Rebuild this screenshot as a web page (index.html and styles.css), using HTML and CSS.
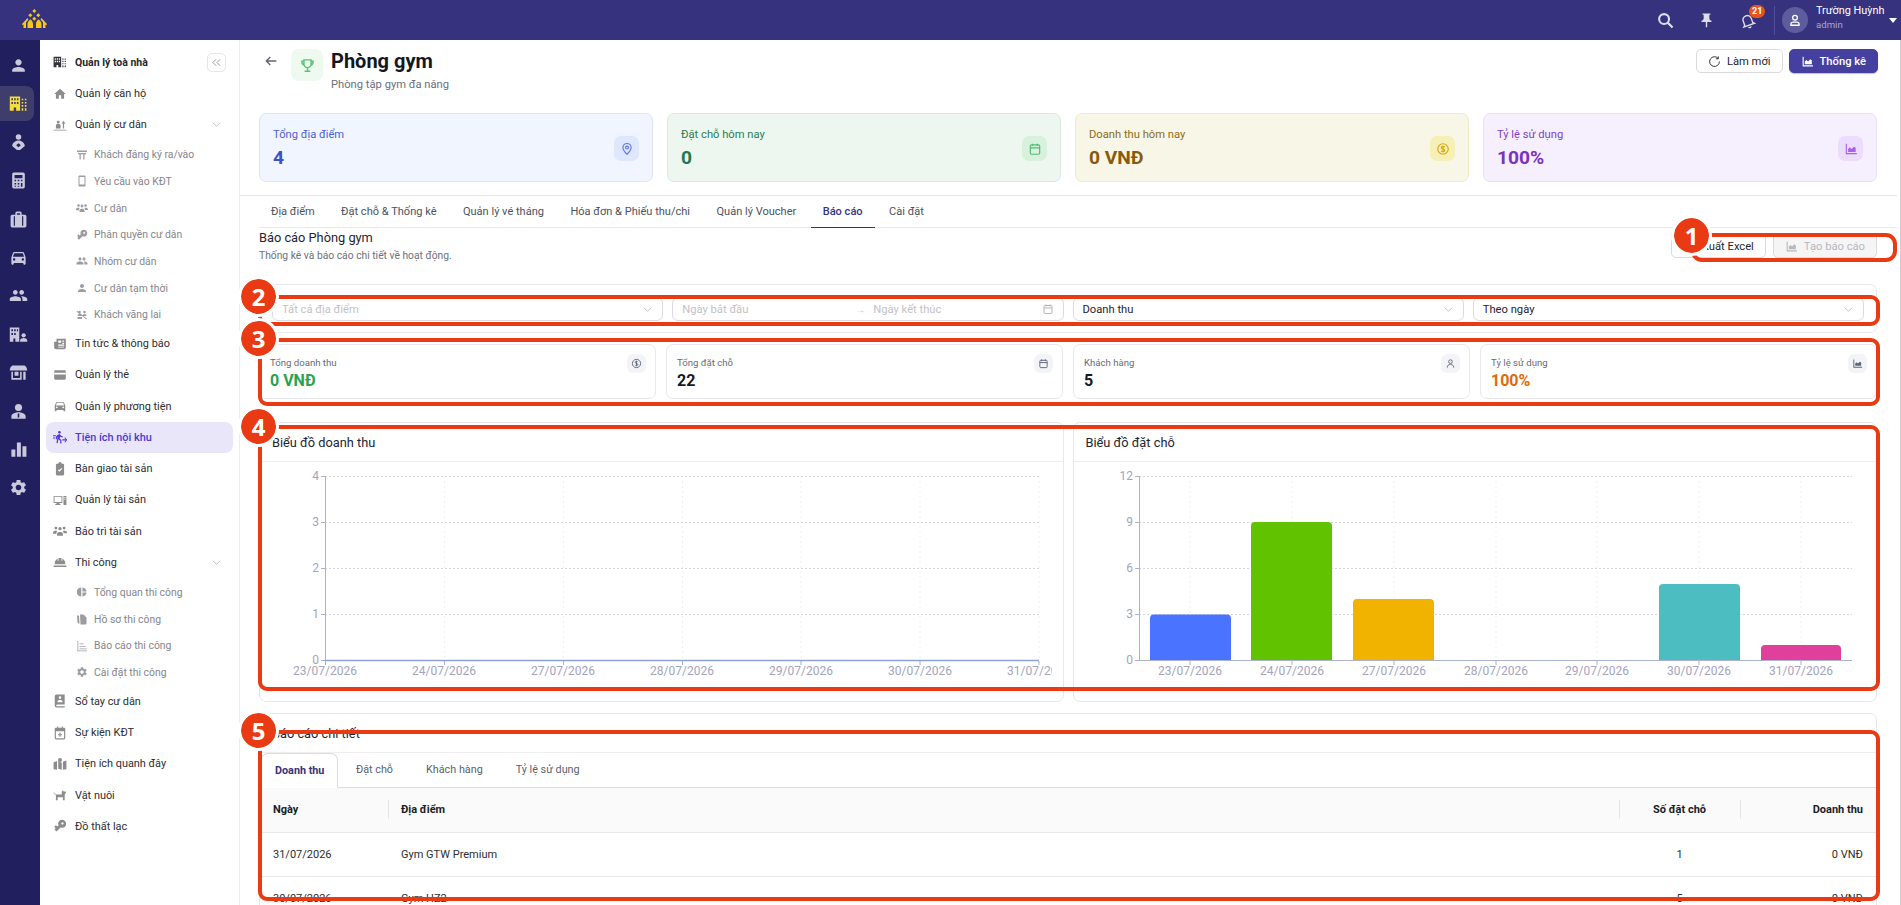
FILE: index.html
```html
<!DOCTYPE html>
<html lang="vi">
<head>
  <meta charset="UTF-8" />
  <title>Phòng gym</title>
  <meta name="viewport" content="width=device-width, initial-scale=1" />
  <link rel="stylesheet" href="styles.css">
</head>
<body>
  <!-- icon sprite -->
  <svg class="sprite" aria-hidden="true">
    <symbol id="i-person" viewBox="0 0 24 24"><path d="M12 12c2.21 0 4-1.79 4-4s-1.79-4-4-4-4 1.79-4 4 1.79 4 4 4zm0 2c-2.67 0-8 1.34-8 4v2h16v-2c0-2.66-5.33-4-8-4z"/></symbol>
    <symbol id="i-home" viewBox="0 0 24 24"><path d="M10 20v-6h4v6h5v-8h3L12 3 2 12h3v8z"/></symbol>
    <symbol id="i-group" viewBox="0 0 24 24"><path d="M16 11c1.66 0 2.99-1.34 2.99-3S17.66 5 16 5c-1.66 0-3 1.34-3 3s1.34 3 3 3zm-8 0c1.66 0 2.99-1.34 2.99-3S9.66 5 8 5C6.34 5 5 6.34 5 8s1.34 3 3 3zm0 2c-2.33 0-7 1.17-7 3.5V19h14v-2.5c0-2.33-4.67-3.5-7-3.5zm8 0c-.29 0-.62.02-.97.05 1.16.84 1.97 1.97 1.97 3.45V19h6v-2.5c0-2.33-4.67-3.5-7-3.5z"/></symbol>
    <symbol id="i-car" viewBox="0 0 24 24"><path d="M18.92 6.01C18.72 5.42 18.16 5 17.5 5h-11c-.66 0-1.21.42-1.42 1.01L3 12v8c0 .55.45 1 1 1h1c.55 0 1-.45 1-1v-1h12v1c0 .55.45 1 1 1h1c.55 0 1-.45 1-1v-8l-2.08-5.99zM6.5 16c-.83 0-1.5-.67-1.5-1.5S5.67 13 6.5 13s1.5.67 1.5 1.5S7.33 16 6.5 16zm11 0c-.83 0-1.5-.67-1.5-1.5s.67-1.5 1.5-1.5 1.5.67 1.5 1.5-.67 1.5-1.5 1.5zM5 11l1.5-4.5h11L19 11H5z"/></symbol>
    <symbol id="i-card" viewBox="0 0 24 24"><path fill-rule="evenodd" d="M4 4h16a2 2 0 0 1 2 2v12a2 2 0 0 1-2 2H4a2 2 0 0 1-2-2V6a2 2 0 0 1 2-2zM2 8v3h20V8z"/></symbol>
    <symbol id="i-gear" viewBox="0 0 24 24"><path d="M19.14 12.94c.04-.3.06-.61.06-.94 0-.32-.02-.64-.07-.94l2.03-1.58c.18-.14.23-.41.12-.61l-1.92-3.32c-.12-.22-.37-.29-.59-.22l-2.39.96c-.5-.38-1.03-.7-1.62-.94l-.36-2.54c-.04-.24-.24-.41-.48-.41h-3.84c-.24 0-.43.17-.47.41l-.36 2.54c-.59.24-1.13.57-1.62.94l-2.39-.96c-.22-.08-.47 0-.59.22L2.74 8.87c-.12.21-.08.47.12.61l2.03 1.58c-.05.3-.09.63-.09.94s.02.64.07.94l-2.03 1.58c-.18.14-.23.41-.12.61l1.92 3.32c.12.22.37.29.59.22l2.39-.96c.5.38 1.03.7 1.62.94l.36 2.54c.05.24.24.41.48.41h3.84c.24 0 .44-.17.47-.41l.36-2.54c.59-.24 1.13-.56 1.62-.94l2.39.96c.22.08.47 0 .59-.22l1.92-3.32c.12-.22.07-.47-.12-.61l-2.01-1.58zM12 15.6c-1.98 0-3.6-1.62-3.6-3.6s1.62-3.6 3.6-3.6 3.6 1.62 3.6 3.6-1.62 3.6-3.6 3.6z"/></symbol>
    <symbol id="i-key" viewBox="0 0 24 24"><path transform="rotate(135 12 12)" fill-rule="evenodd" d="M13 9.500C12 7 9.600 5 7 5c-3.900 0-7 3.100-7 7s3.100 7 7 7c2.600 0 5-2 6-4.500h3V18h4v-3.500h3v-5zM6 14a2 2 0 1 1 0-4 2 2 0 0 1 0 4z"/></symbol>
    <symbol id="i-building" viewBox="0 0 24 24"><path fill-rule="evenodd" d="M1 3h13v18H9v-4H6v4H1zM3 5.500V8h2V5.500zM6.500 5.500V8h2V5.500zM10 5.500V8h2V5.500zM3 10v2.500h2V10zM6.500 10v2.500h2V10zM10 10v2.500h2V10z"/><path d="M16 6h2v2h-2zM20 6h2v2h-2zM16 10h2v2h-2zM20 10h2v2h-2zM16 14h2v2h-2zM20 14h2v2h-2zM16 18h2v3h-2zM20 18h2v3h-2z"/></symbol>
    <symbol id="i-building-user" viewBox="0 0 24 24"><path fill-rule="evenodd" d="M1 3h12v18H8v-4H5.500v4H1zM3 5.500V8h2V5.500zM6.500 5.500V8h2V5.500zM10 5.500V8h1.500V5.500zM3 10v2.500h2V10zM6.500 10v2.500h2V10z"/><circle cx="18.500" cy="13" r="2.700"/><path d="M14 21v-1.500c0-2 3-3 4.500-3s4.500 1 4.500 3V21z"/></symbol>
    <symbol id="i-calc" viewBox="0 0 24 24"><path fill-rule="evenodd" d="M6 2h12a2 2 0 0 1 2 2v16a2 2 0 0 1-2 2H6a2 2 0 0 1-2-2V4a2 2 0 0 1 2-2zM7 5v4h10V5zM7 11v2h2v-2zM11 11v2h2v-2zM15 11v2h2v-2zM7 15v2h2v-2zM11 15v2h2v-2zM15 15v5h2v-5zM7 18.500V20h2v-1.500zM11 18.500V20h2v-1.500z"/></symbol>
    <symbol id="i-case" viewBox="0 0 24 24"><path fill-rule="evenodd" d="M8 6V4a2 2 0 0 1 2-2h4a2 2 0 0 1 2 2v2h4a2 2 0 0 1 2 2v12a2 2 0 0 1-2 2H4a2 2 0 0 1-2-2V8a2 2 0 0 1 2-2zM10 4v2h4V4zM6 8v12h1.500V8zM16.500 8v12H18V8z"/></symbol>
    <symbol id="i-hands" viewBox="0 0 24 24"><circle cx="12" cy="5" r="3.500"/><path fill-rule="evenodd" d="M12 9.500c-4 0-8 3.500-8 7l6 5h4l6-5c0-3.500-4-7-8-7zM12 13l-3 2.500 3 2.500 3-2.500z"/></symbol>
    <symbol id="i-shop" viewBox="0 0 24 24"><path fill-rule="evenodd" d="M5 3h14c2 0 4 3 4 6.500H1C1 6 3 3 5 3zM3 11h2v8h9v-8h2v10H3zM18 11h3v10h-3zM7 11h5v5H7z"/></symbol>
    <symbol id="i-manager" viewBox="0 0 24 24"><circle cx="12" cy="7" r="4.500"/><path fill-rule="evenodd" d="M3 21v-3c0-3 5-5 9-5s9 2 9 5v3zM11 14.500v5h2v-5z"/></symbol>
    <symbol id="i-bars" viewBox="0 0 24 24"><path d="M3 12h5v9H3zM10 3h5v18h-5zM17 8h5v13h-5z"/></symbol>
    <symbol id="i-arrows-up" viewBox="0 0 24 24"><circle cx="9" cy="7" r="2.500"/><path d="M5 18v-5c0-2 2-3 4-3s4 1 4 3v5zM1 20h22v1.500H1zM18 5l3.500 4.500H19V18h-2V9.500h-2.500z"/></symbol>
    <symbol id="i-gate" viewBox="0 0 24 24"><path d="M2 3h20v3H2zM4 8h16v2.500h-3V21h-2.500V10.500h-5V21H7V10.500H4z"/></symbol>
    <symbol id="i-phone" viewBox="0 0 24 24"><path fill-rule="evenodd" d="M7 1h10a2 2 0 0 1 2 2v18a2 2 0 0 1-2 2H7a2 2 0 0 1-2-2V3a2 2 0 0 1 2-2zM7 4v15h10V4z"/></symbol>
    <symbol id="i-walk" viewBox="0 0 24 24"><circle cx="7" cy="6" r="2.500"/><circle cx="17" cy="6" r="2.500"/><path d="M3 14c0-2.500 2-4 4-4s4 1.500 4 4zM13 14c0-2.500 2-4 4-4s4 1.500 4 4zM2 3.500l20 16-1 1.500L1 5z"/><path d="M3 20h9v-4H3z"/></symbol>
    <symbol id="i-news" viewBox="0 0 24 24"><path fill-rule="evenodd" d="M6 3h16v15a3 3 0 0 1-3 3H5a3 3 0 0 1-3-3V8h4zM9 6v4h5V6zM16 6v2h3V6zM16 10v2h3v-2zM9 13v2h10v-2zM9 16.500V18h10v-1.500z"/></symbol>
    <symbol id="i-run" viewBox="0 0 24 24"><circle cx="11" cy="4" r="2.200"/><path d="M7 9l4-2 3 3 3 1-.6 2-4-1.400-1 3 3 2.500V23h-2v-4.500l-3-2.500-1.500 6.500-2-.5L8 12l-1 1v3H5v-4zM16 16h6l-2.500-2.500 1-1L24.500 17l-4 4.500-1-1L22 18h-6z"/><path d="M0 9h5v1.500H0zM0 13h4v1.500H0z"/></symbol>
    <symbol id="i-clip" viewBox="0 0 24 24"><path fill-rule="evenodd" d="M9 3a3 3 0 0 1 6 0h2a2 2 0 0 1 2 2v16a2 2 0 0 1-2 2H7a2 2 0 0 1-2-2V5a2 2 0 0 1 2-2zM8.500 14l2.500 2.500 5-5-1.300-1.300-3.700 3.700-1.200-1.200z"/></symbol>
    <symbol id="i-device" viewBox="0 0 24 24"><path fill-rule="evenodd" d="M1 5h15v12h-5v2h2v1.500H4V19h2v-2H1zM2.500 6.500v9h12v-9zM18 5h5v15.500h-5zM19.500 7v1.500h2V7zM19.500 10v1.500h2V10z"/></symbol>
    <symbol id="i-team" viewBox="0 0 24 24"><circle cx="5" cy="7" r="2.500"/><circle cx="12" cy="8" r="2.800"/><circle cx="19" cy="7" r="2.500"/><path d="M0 15c0-2.500 2-3.500 5-3.500 1 0 2 .2 2.500.5C6 13 6 15 6 16.500H0zM7 20v-3c0-2.500 2.500-3.500 5-3.500s5 1 5 3.500v3zM18 16c0-1.500 0-3-1.500-4 .5-.3 1.500-.5 2.500-.5 3 0 5 1 5 3.500v1z"/></symbol>
    <symbol id="i-helmet" viewBox="0 0 24 24"><path d="M9.500 5h5v5H16V6.500c3 1.300 5 4 5 7.500v2H3v-2c0-3.500 2-6.200 5-7.500V10h1.500zM1 18h22v2.500H1z"/></symbol>
    <symbol id="i-pie" viewBox="0 0 24 24"><path d="M10.500 3v18a9 9 0 0 1 0-18zM13 3a9 9 0 0 1 8 8h-8zM13 13h8a9 9 0 0 1-8 8z"/></symbol>
    <symbol id="i-files" viewBox="0 0 24 24"><path d="M2 5h4l1 16H5a2 2 0 0 1-2-2zM8 3h7l6 6v12a2 2 0 0 1-2 2H9z"/></symbol>
    <symbol id="i-report" viewBox="0 0 24 24"><path d="M3 2h1.500v19H22v1.500H3zM7 7h8v1.500H7zM7 12h12v1.500H7zM7 17h14v1.500H7z"/></symbol>
    <symbol id="i-book" viewBox="0 0 24 24"><path fill-rule="evenodd" d="M6 1h14v17H7a1.500 1.500 0 0 0 0 3h13v2H6a3 3 0 0 1-3-3V4a3 3 0 0 1 3-3zM12 4a2.200 2.200 0 1 0 0 4.400A2.200 2.200 0 0 0 12 4zM7.500 14h9c0-2.500-2.500-4-4.500-4s-4.500 1.500-4.500 4z"/></symbol>
    <symbol id="i-event" viewBox="0 0 24 24"><path fill-rule="evenodd" d="M7 1h2v2h6V1h2v2h2a2 2 0 0 1 2 2v16a2 2 0 0 1-2 2H5a2 2 0 0 1-2-2V5a2 2 0 0 1 2-2h2zM5 9v12h14V9zM11 11.500h2V14h2.500v2H13v2.500h-2V16H8.500v-2H11z"/></symbol>
    <symbol id="i-map" viewBox="0 0 24 24"><path fill-rule="evenodd" d="M1 9l6-2v15l-6-1zM9 7l6 3v12l-6-2zM17 8l6-2v15l-6 1z"/><circle cx="12" cy="5" r="3.500"/></symbol>
    <symbol id="i-dog" viewBox="0 0 24 24"><path d="M1 7l2 3c1 1 2 1 3 1h9V6l2-2 1 2h4v2.500L20 11v10h-3v-5H8v5H5v-9C3 11 1 10 1 7z"/></symbol>
    <symbol id="i-chart" viewBox="0 0 24 24"><path d="M3 3h2v16h17v2H3zM7 12l3-3 3 3 4-4 3 2v7H7z"/></symbol>
    <symbol id="i-pin" viewBox="0 0 24 24"><path d="M16 9V4h1.500V2h-11v2H8v5c0 1.660-1.340 3-3 3v2h6v7l1 1 1-1v-7h6v-2c-1.660 0-3-1.340-3-3z"/></symbol>
    <symbol id="s-pin" viewBox="0 0 24 24"><path d="M12 21s7-6.500 7-11.500a7 7 0 0 0-14 0C5 14.500 12 21 12 21z"/><circle cx="12" cy="9.500" r="2.500"/></symbol>
    <symbol id="s-cal" viewBox="0 0 24 24"><rect x="4" y="5" width="16" height="16" rx="2"/><path d="M8 3v4M16 3v4M4 10h16"/></symbol>
    <symbol id="s-coin" viewBox="0 0 24 24"><circle cx="12" cy="12" r="9"/><path d="M15 9c-.5-1-1.500-1.500-3-1.500-1.800 0-3 .8-3 2.200 0 3 6 1.600 6 4.600 0 1.400-1.200 2.200-3 2.200-1.500 0-2.500-.5-3-1.500M12 6v12"/></symbol>
    <symbol id="s-user" viewBox="0 0 24 24"><circle cx="12" cy="8" r="4"/><path d="M5 21v-1c0-3.500 3-6 7-6s7 2.500 7 6v1"/></symbol>
    <symbol id="s-download" viewBox="0 0 24 24"><path d="M12 3v13M6 11l6 6 6-6M4 21h16"/></symbol>
  </svg>

  <header class="topbar">
    <svg class="logo" viewBox="22 8 26 20" aria-label="Logo">
      <path class="logo-dot" d="M34.300 8l2 2-2 2-2-2zM30.300 12.300l2 2-2 2-2-2zM38.300 12.300l2 2-2 2-2-2zM34.300 15.700l2 2-2 2-2-2z"/>
      <path class="logo-dot" d="M22 23l5.500-6 1 1.500-2.500 3V27h-2.500v-3.500l-.8.700zM47 23l-5.500-6-1 1.500 2.500 3V27h2.500v-3.500l.8.700zM27.500 27v-4c0-2 1.500-3.500 3-4.500 1.500 1 2.500 2.500 2.500 4.500v4zM36 27v-4c0-2 1-3.500 2.500-4.500 1.500 1 3 2.500 3 4.500v4z"/>
    </svg>
    <div class="topbar-right">
      <svg class="top-ico search" viewBox="0 0 24 24"><circle cx="10" cy="10" r="7"/><path d="M15 15l7 7"/></svg>
      <svg class="top-fill"><use href="#i-pin"/></svg>
      <span class="bell">
        <svg class="top-ico" viewBox="0 0 24 24"><g transform="rotate(-20 12 12)"><path d="M18 17v-6c0-3.300-2.600-6-6-6s-6 2.700-6 6v6l-2 2h16z"/><path d="M10 21.500a2.500 2.500 0 0 0 4 0"/></g></svg>
        <span class="badge">21</span>
      </span>
      <span class="top-divider"></span>
      <span class="avatar"><svg class="top-ico small" viewBox="0 0 24 24"><circle cx="12" cy="8" r="4"/><path d="M5 21v-2c0-2 2-3.500 4-3.500h6c2 0 4 1.500 4 3.500v2z"/></svg></span>
      <div class="user">
        <div class="user-name">Trường Huỳnh</div>
        <div class="user-role">admin</div>
      </div>
      <span class="caret"></span>
    </div>
  </header>

  <div class="layout">
    <nav class="rail" aria-label="Modules">
      <a><svg><use href="#i-person"/></svg></a>
      <a class="active"><svg><use href="#i-building"/></svg></a>
      <a><svg><use href="#i-hands"/></svg></a>
      <a><svg><use href="#i-calc"/></svg></a>
      <a><svg><use href="#i-case"/></svg></a>
      <a><svg><use href="#i-car"/></svg></a>
      <a><svg><use href="#i-group"/></svg></a>
      <a><svg><use href="#i-building-user"/></svg></a>
      <a><svg><use href="#i-shop"/></svg></a>
      <a><svg><use href="#i-manager"/></svg></a>
      <a><svg><use href="#i-bars"/></svg></a>
      <a><svg><use href="#i-gear"/></svg></a>
    </nav>

    <nav class="sidebar" aria-label="Quản lý toà nhà">
      <div class="side-head">
        <svg class="side-ico dark"><use href="#i-building"/></svg>
        <span>Quản lý toà nhà</span>
        <button class="collapse-btn" aria-label="Thu gọn">
          <svg viewBox="0 0 24 24"><path d="M11 5l-7 7 7 7M20 5l-7 7 7 7"/></svg>
        </button>
      </div>
      <a class="side-item"><svg class="side-ico"><use href="#i-home"/></svg>Quản lý căn hộ</a>
      <a class="side-item"><svg class="side-ico"><use href="#i-arrows-up"/></svg>Quản lý cư dân<svg class="chev" viewBox="0 0 24 24"><path d="M4 8l8 8 8-8"/></svg></a>
      <div class="side-sub">
        <a><svg class="sub-ico"><use href="#i-gate"/></svg>Khách đăng ký ra/vào</a>
        <a><svg class="sub-ico"><use href="#i-phone"/></svg>Yêu cầu vào KĐT</a>
        <a><svg class="sub-ico"><use href="#i-team"/></svg>Cư dân</a>
        <a><svg class="sub-ico"><use href="#i-key"/></svg>Phân quyền cư dân</a>
        <a><svg class="sub-ico"><use href="#i-group"/></svg>Nhóm cư dân</a>
        <a><svg class="sub-ico"><use href="#i-person"/></svg>Cư dân tạm thời</a>
        <a><svg class="sub-ico"><use href="#i-walk"/></svg>Khách vãng lai</a>
      </div>
      <a class="side-item"><svg class="side-ico"><use href="#i-news"/></svg>Tin tức &amp; thông báo</a>
      <a class="side-item"><svg class="side-ico"><use href="#i-card"/></svg>Quản lý thẻ</a>
      <a class="side-item"><svg class="side-ico"><use href="#i-car"/></svg>Quản lý phương tiện</a>
      <a class="side-item active"><svg class="side-ico"><use href="#i-run"/></svg>Tiện ích nội khu</a>
      <a class="side-item"><svg class="side-ico"><use href="#i-clip"/></svg>Bàn giao tài sản</a>
      <a class="side-item"><svg class="side-ico"><use href="#i-device"/></svg>Quản lý tài sản</a>
      <a class="side-item"><svg class="side-ico"><use href="#i-team"/></svg>Bảo trì tài sản</a>
      <a class="side-item"><svg class="side-ico"><use href="#i-helmet"/></svg>Thi công<svg class="chev" viewBox="0 0 24 24"><path d="M4 8l8 8 8-8"/></svg></a>
      <div class="side-sub">
        <a><svg class="sub-ico"><use href="#i-pie"/></svg>Tổng quan thi công</a>
        <a><svg class="sub-ico"><use href="#i-files"/></svg>Hồ sơ thi công</a>
        <a><svg class="sub-ico"><use href="#i-report"/></svg>Báo cáo thi công</a>
        <a><svg class="sub-ico"><use href="#i-gear"/></svg>Cài đặt thi công</a>
      </div>
      <a class="side-item"><svg class="side-ico"><use href="#i-book"/></svg>Sổ tay cư dân</a>
      <a class="side-item"><svg class="side-ico"><use href="#i-event"/></svg>Sự kiện KĐT</a>
      <a class="side-item"><svg class="side-ico"><use href="#i-map"/></svg>Tiện ích quanh đây</a>
      <a class="side-item"><svg class="side-ico"><use href="#i-dog"/></svg>Vật nuôi</a>
      <a class="side-item"><svg class="side-ico"><use href="#i-key"/></svg>Đồ thất lạc</a>
    </nav>

    <main class="main">
      <div class="page-head">
        <svg class="back" viewBox="0 0 24 24"><path d="M20 12H5M11 6l-6 6 6 6"/></svg>
        <span class="page-icon">
          <svg viewBox="0 0 24 24"><path d="M7 4h10v6a5 5 0 0 1-10 0zM12 15v5M8 20h8M7 6H4c0 3 1 5 3 5.500M17 6h3c0 3-1 5-3 5.500"/></svg>
        </span>
        <div class="page-title">
          <h1>Phòng gym</h1>
          <p>Phòng tập gym đa năng</p>
        </div>
        <div class="page-actions">
          <button class="btn"><svg viewBox="0 0 24 24"><path d="M19 6.500A9 9 0 1 0 21 12M19 2.500V7h-4.500"/></svg>Làm mới</button>
          <button class="btn btn-primary"><svg class="fill"><use href="#i-chart"/></svg>Thống kê</button>
        </div>
      </div>

      <section class="kpis">
        <div class="kpi kpi-blue">
          <div><div class="kpi-label">Tổng địa điểm</div><div class="kpi-value">4</div></div>
          <span class="kpi-icon"><svg><use href="#s-pin"/></svg></span>
        </div>
        <div class="kpi kpi-green">
          <div><div class="kpi-label">Đặt chỗ hôm nay</div><div class="kpi-value">0</div></div>
          <span class="kpi-icon"><svg><use href="#s-cal"/></svg></span>
        </div>
        <div class="kpi kpi-yellow">
          <div><div class="kpi-label">Doanh thu hôm nay</div><div class="kpi-value">0 VNĐ</div></div>
          <span class="kpi-icon"><svg><use href="#s-coin"/></svg></span>
        </div>
        <div class="kpi kpi-purple">
          <div><div class="kpi-label">Tỷ lệ sử dụng</div><div class="kpi-value">100%</div></div>
          <span class="kpi-icon"><svg class="fill"><use href="#i-chart"/></svg></span>
        </div>
      </section>

      <div class="tabs">
        <a>Địa điểm</a>
        <a>Đặt chỗ &amp; Thống kê</a>
        <a>Quản lý vé tháng</a>
        <a>Hóa đơn &amp; Phiếu thu/chi</a>
        <a>Quản lý Voucher</a>
        <a class="active">Báo cáo</a>
        <a>Cài đặt</a>
      </div>

      <div class="content">
        <div class="report-head">
          <div>
            <h2>Báo cáo Phòng gym</h2>
            <p>Thống kê và báo cáo chi tiết về hoạt động.</p>
          </div>
          <div class="report-actions">
            <button class="btn"><svg><use href="#s-download"/></svg>Xuất Excel</button>
            <button class="btn btn-disabled"><svg class="fill"><use href="#i-chart"/></svg>Tạo báo cáo</button>
          </div>
        </div>

        <section class="card filters">
          <div class="field placeholder">Tất cả địa điểm<svg class="chev" viewBox="0 0 24 24"><path d="M4 8l8 8 8-8"/></svg></div>
          <div class="field placeholder range">
            <span class="range-start">Ngày bắt đầu</span>
            <span class="range-arrow">→</span>
            <span class="range-end">Ngày kết thúc</span>
            <svg class="cal"><use href="#s-cal"/></svg>
          </div>
          <div class="field">Doanh thu<svg class="chev" viewBox="0 0 24 24"><path d="M4 8l8 8 8-8"/></svg></div>
          <div class="field">Theo ngày<svg class="chev" viewBox="0 0 24 24"><path d="M4 8l8 8 8-8"/></svg></div>
        </section>

        <section class="stats">
          <div class="card stat">
            <div><div class="stat-label">Tổng doanh thu</div><div class="stat-value green">0 VNĐ</div></div>
            <span class="stat-icon"><svg><use href="#s-coin"/></svg></span>
          </div>
          <div class="card stat">
            <div><div class="stat-label">Tổng đặt chỗ</div><div class="stat-value">22</div></div>
            <span class="stat-icon"><svg><use href="#s-cal"/></svg></span>
          </div>
          <div class="card stat">
            <div><div class="stat-label">Khách hàng</div><div class="stat-value">5</div></div>
            <span class="stat-icon"><svg><use href="#s-user"/></svg></span>
          </div>
          <div class="card stat">
            <div><div class="stat-label">Tỷ lệ sử dụng</div><div class="stat-value orange">100%</div></div>
            <span class="stat-icon"><svg class="fill"><use href="#i-chart"/></svg></span>
          </div>
        </section>

        <section class="charts">
          <div class="card chart-card">
            <div class="card-title">Biểu đồ doanh thu</div>
            <svg class="chart chart-line" viewBox="260 462 792 239">
              <g class="grid-v">
                <path d="M444.500 476V660M563.500 476V660M682.500 476V660M801 476V660M920 476V660M1039 476V660"/>
              </g>
              <g class="grid-h">
                <path d="M325 476.500H1039M325 522.500H1039M325 568.500H1039M325 614.500H1039"/>
              </g>
              <path class="axis" d="M325.500 476V661M321 476.500H325M321 522.500H325M321 568.500H325M321 614.500H325M321 660.500H325"/>
              <path class="axis" d="M325.500 661V665M444.500 661V665M563.500 661V665M682.500 661V665M801 661V665M920 661V665M1039 661V665"/>
              <path class="zero-line" d="M325 660.500H1039"/>
              <g class="y-labels">
                <text x="319" y="476">4</text>
                <text x="319" y="522">3</text>
                <text x="319" y="568">2</text>
                <text x="319" y="614">1</text>
                <text x="319" y="660">0</text>
              </g>
              <g class="x-labels">
                <text x="325" y="671">23/07/2026</text>
                <text x="444" y="671">24/07/2026</text>
                <text x="563" y="671">27/07/2026</text>
                <text x="682" y="671">28/07/2026</text>
                <text x="801" y="671">29/07/2026</text>
                <text x="920" y="671">30/07/2026</text>
                <text x="1039" y="671">31/07/2026</text>
              </g>
            </svg>
          </div>
          <div class="card chart-card">
            <div class="card-title">Biểu đồ đặt chỗ</div>
            <svg class="chart chart-bar" viewBox="1074 462 802 239">
              <g class="grid-v">
                <path d="M1190 476V660M1292 476V660M1394 476V660M1496 476V660M1597 476V660M1699 476V660M1801 476V660"/>
              </g>
              <g class="grid-h">
                <path d="M1139 476.500H1852M1139 522.500H1852M1139 568.500H1852M1139 614.500H1852"/>
              </g>
              <path fill="#4a74ff" d="M1150 660.500V618.500a4 4 0 0 1 4-4h73a4 4 0 0 1 4 4V660.500z"/>
              <path fill="#61c300" d="M1251 660.500V526a4 4 0 0 1 4-4h73a4 4 0 0 1 4 4V660.500z"/>
              <path fill="#f2b200" d="M1353 660.500V603a4 4 0 0 1 4-4h73a4 4 0 0 1 4 4V660.500z"/>
              <path fill="#4cbdc0" d="M1659 660.500V588a4 4 0 0 1 4-4h73a4 4 0 0 1 4 4V660.500z"/>
              <path fill="#e03f9c" d="M1761 660.500V649a4 4 0 0 1 4-4h72a4 4 0 0 1 4 4V660.500z"/>
              <path class="axis" d="M1139.500 476V661M1135 476.500H1139M1135 522.500H1139M1135 568.500H1139M1135 614.500H1139M1135 660.500H1852"/>
              <path class="axis" d="M1190 661V665M1292 661V665M1394 661V665M1496 661V665M1597 661V665M1699 661V665M1801 661V665"/>
              <g class="y-labels">
                <text x="1133" y="476">12</text>
                <text x="1133" y="522">9</text>
                <text x="1133" y="568">6</text>
                <text x="1133" y="614">3</text>
                <text x="1133" y="660">0</text>
              </g>
              <g class="x-labels">
                <text x="1190" y="671">23/07/2026</text>
                <text x="1292" y="671">24/07/2026</text>
                <text x="1394" y="671">27/07/2026</text>
                <text x="1496" y="671">28/07/2026</text>
                <text x="1597" y="671">29/07/2026</text>
                <text x="1699" y="671">30/07/2026</text>
                <text x="1801" y="671">31/07/2026</text>
              </g>
            </svg>
          </div>
        </section>

        <section class="card detail">
          <div class="card-title">Báo cáo chi tiết</div>
          <div class="detail-tabs">
            <a class="active">Doanh thu</a>
            <a>Đặt chỗ</a>
            <a>Khách hàng</a>
            <a>Tỷ lệ sử dụng</a>
          </div>
          <table class="report-table">
            <thead>
              <tr><th class="col-date">Ngày</th><th>Địa điểm</th><th class="col-count">Số đặt chỗ</th><th class="col-money">Doanh thu</th></tr>
            </thead>
            <tbody>
              <tr><td>31/07/2026</td><td>Gym GTW Premium</td><td class="col-count">1</td><td class="col-money">0 VNĐ</td></tr>
              <tr><td>30/07/2026</td><td>Gym HZ2</td><td class="col-count">5</td><td class="col-money">0 VNĐ</td></tr>
            </tbody>
          </table>
        </section>
      </div>
    </main>
  </div>

  <!-- numbered callouts drawn over the page -->
  <div class="callout box-1"></div>
  <div class="callout box-2"></div>
  <div class="callout box-3"></div>
  <div class="callout box-4"></div>
  <div class="callout box-5"></div>
  <span class="marker marker-1">1</span>
  <span class="marker marker-2">2</span>
  <span class="marker marker-3">3</span>
  <span class="marker marker-4">4</span>
  <span class="marker marker-5">5</span>
</body>
</html>
```

FILE: styles.css
```css
* {
  box-sizing: border-box;
}
html, body {
  height: 100%;
}
body {
  font-family: Roboto, 'Liberation Sans', sans-serif;
  font-size: 11.2px;
  background: #fff;
  margin: 0;
  color: #1f2433;
  overflow: hidden;
  position: relative;
}
.sprite {
  display: none;
}
a {
  color: inherit;
  text-decoration: none;
}

/* top bar */
.topbar {
  height: 40px;
  background: #36327e;
  display: flex;
  align-items: center;
  justify-content: space-between;
  padding: 0 4px 0 22px;
}
.logo {
  width: 26px;
  height: 20px;
  margin-top: -3px;
}
.logo-dot {
  fill: #f5c814;
}
.topbar-right {
  display: flex;
  align-items: center;
  color: #fff;
}
.top-ico {
  width: 17px;
  height: 17px;
  fill: none;
  stroke: #dcdcec;
  stroke-width: 2;
  display: block;
}
.top-ico.search {
  stroke-width: 3;
}
.top-ico.small {
  width: 14px;
  height: 14px;
  stroke-width: 2.2;
  stroke: #fff;
}
.top-fill {
  width: 17px;
  height: 17px;
  fill: #dcdcec;
  margin-left: 24px;
}
.bell {
  position: relative;
  margin-left: 24px;
}
.badge {
  position: absolute;
  top: -7px;
  left: 10px;
  background: #e8551c;
  color: #fff;
  font-size: 9px;
  font-weight: 700;
  border-radius: 7px;
  padding: 0 3px;
  line-height: 13px;
  min-width: 16px;
  text-align: center;
}
.top-divider {
  width: 1px;
  height: 29px;
  background: #504da0;
  margin-left: 18px;
  margin-right: 7px;
}
.avatar {
  width: 26px;
  height: 26px;
  border-radius: 50%;
  background: #5f5c9e;
  display: flex;
  align-items: center;
  justify-content: center;
}
.user {
  margin-left: 8px;
  width: 73px;
}
.user-name {
  font-size: 10.9px;
  line-height: 13px;
  margin-top: -5px;
}
.user-role {
  font-size: 9.6px;
  line-height: 12px;
  margin-top: 2px;
  color: #a9a8cc;
}
.caret {
  width: 0;
  height: 0;
  border-left: 4px solid transparent;
  border-right: 4px solid transparent;
  border-top: 5px solid #fff;
}

/* page frame */
.layout {
  display: flex;
  height: 865px;
}
.rail {
  width: 40px;
  background: #221f5e;
  flex-shrink: 0;
  padding-top: 8px;
  display: flex;
  flex-direction: column;
  gap: 3.4px;
}
.rail a {
  width: 34px;
  height: 35px;
  display: flex;
  align-items: center;
  justify-content: center;
  border-radius: 0 8px 8px 0;
}
.rail a svg {
  width: 19px;
  height: 19px;
  fill: #c9c8dc;
  margin-right: -2px;
}
.rail a.active {
  background: #3f3d6b;
}
.rail a.active svg {
  fill: #f7dc3e;
}

/* sidebar */
.sidebar {
  width: 200px;
  flex-shrink: 0;
  background: #fff;
  border-right: 1px solid #ececf0;
  padding: 6px 6px 0;
  color: #2b2d33;
  font-size: 10.9px;
}
.side-head {
  height: 32px;
  display: flex;
  align-items: center;
  padding-left: 7px;
  font-size: 10.5px;
  font-weight: 700;
  color: #26282e;
}
.side-ico {
  width: 14px;
  height: 14px;
  fill: #8c8c8c;
  margin-right: 8px;
  flex-shrink: 0;
}
.side-ico.dark {
  fill: #33353c;
}
.collapse-btn {
  margin-left: auto;
  margin-right: 7px;
  width: 19px;
  height: 19px;
  padding: 3px;
  background: #fff;
  border: 1px solid #e5e5ea;
  border-radius: 5px;
  display: flex;
}
.collapse-btn svg {
  fill: none;
  stroke: #8d8d99;
  stroke-width: 2;
}
.side-item {
  height: 31.25px;
  display: flex;
  align-items: center;
  padding-left: 7px;
  border-radius: 8px;
}
.side-item.active {
  background: #e8e6f8;
  color: #4f36d6;
  font-weight: 500;
}
.side-item.active .side-ico {
  fill: #4f36d6;
}
.chev {
  width: 11px;
  height: 11px;
  fill: none;
  stroke: #a8a8b0;
  stroke-width: 1.6;
  margin-left: auto;
}
.side-item .chev {
  margin-right: 11px;
}
.side-sub {
  padding-top: 1px;
}
.side-sub a {
  height: 26.67px;
  display: flex;
  align-items: center;
  padding-left: 30px;
  color: #85858c;
  font-size: 10.4px;
}
.sub-ico {
  width: 12px;
  height: 12px;
  fill: #9b9ba1;
  margin-right: 6px;
  flex-shrink: 0;
}

/* main column */
.main {
  flex: 1;
  min-width: 0;
  overflow: hidden;
  border-right: 1px solid #cfcfd4;
  padding-right: 3px;
}
.page-head {
  height: 73px;
  display: flex;
  align-items: flex-start;
  padding: 9px 19px 0;
  gap: 8px;
}
.back {
  width: 24px;
  height: 24px;
  padding: 4px;
  fill: none;
  stroke: #60646e;
  stroke-width: 2;
}
.page-icon {
  width: 32px;
  height: 32px;
  border-radius: 8px;
  background: #eef9f0;
  display: flex;
  align-items: center;
  justify-content: center;
}
.page-icon svg {
  width: 17px;
  height: 17px;
  fill: none;
  stroke: #59c474;
  stroke-width: 2;
}
.page-title h1 {
  font-size: 20px;
  line-height: 24px;
  font-weight: 700;
  margin: 0;
  color: #14171f;
}
.page-title p {
  margin: 5px 0 0;
  font-size: 11.2px;
  line-height: 14px;
  color: #6b7080;
}
.page-actions {
  margin-left: auto;
  display: flex;
  gap: 6px;
}
.btn {
  font-family: inherit;
  font-size: 11.2px;
  height: 24px;
  padding: 0 11px;
  display: flex;
  align-items: center;
  gap: 6px;
  background: #fff;
  border: 1px solid #d9d9de;
  border-radius: 5px;
  color: #23262f;
}
.btn svg {
  width: 13px;
  height: 13px;
  fill: none;
  stroke: currentColor;
  stroke-width: 1.7;
}
.btn svg.fill {
  fill: currentColor;
  stroke: none;
}
.btn-primary {
  background: #4540a0;
  border-color: #4540a0;
  color: #fff;
  font-weight: 500;
  box-shadow: 0 1px 1px rgba(0,0,0,0.25);
}
.btn-disabled {
  background: #f5f5f5;
  color: #b8b8bd;
}

/* summary cards */
.kpis {
  display: grid;
  grid-template-columns: repeat(4, 1fr);
  gap: 14px;
  padding: 0 20px 0 19px;
}
.kpi {
  height: 69px;
  border: 1px solid;
  border-radius: 7px;
  padding: 14px 13px;
  display: flex;
  justify-content: space-between;
  align-items: flex-start;
}
.kpi-label {
  font-size: 11.2px;
  line-height: 14px;
}
.kpi-value {
  font-size: 19.2px;
  line-height: 24px;
  font-weight: 700;
  margin-top: 4px;
}
.kpi-icon {
  width: 25px;
  height: 25px;
  border-radius: 7px;
  margin-top: 8px;
  display: flex;
  align-items: center;
  justify-content: center;
}
.kpi-icon svg {
  width: 14px;
  height: 14px;
  fill: none;
  stroke: currentColor;
  stroke-width: 2;
}
.kpi-icon svg.fill {
  fill: currentColor;
  stroke: none;
}
.kpi-blue { background: #f0f5ff; border-color: #dbe4fb; color: #4d63d8; }
.kpi-blue .kpi-value { color: #3f4fc4; }
.kpi-blue .kpi-icon { background: #dfe7ff; color: #5f79e6; }
.kpi-green { background: #edf7f0; border-color: #d7ecdd; color: #2a7d55; }
.kpi-green .kpi-value { color: #1f7a50; }
.kpi-green .kpi-icon { background: #d7f1dd; color: #4fbd75; }
.kpi-yellow { background: #f8f6e6; border-color: #f1ecc5; color: #8a6d1a; }
.kpi-yellow .kpi-value { color: #8a5a0b; }
.kpi-yellow .kpi-icon { background: #f6efb6; color: #d8a80f; }
.kpi-purple { background: #f6f0fe; border-color: #eadffa; color: #8040c8; }
.kpi-purple .kpi-value { color: #7a32c0; }
.kpi-purple .kpi-icon { background: #ecdcfd; color: #a862ea; }

/* tabs */
.tabs {
  margin-top: 13px;
  border-top: 1px solid #e6e6ea;
  height: 33px;
  padding-left: 19px;
  display: flex;
  gap: 2.4px;
  position: relative;
  font-size: 11.05px;
}
.tabs::after {
  content: "";
  position: absolute;
  left: 19px;
  right: 0;
  bottom: 0;
  height: 1px;
  background: #e9e9ec;
}
.tabs a {
  padding: 0 12px;
  line-height: 31px;
  color: #4d5160;
  position: relative;
  z-index: 1;
  height: 32px;
}
.tabs a.active {
  color: #36327e;
  font-weight: 500;
  border-bottom: 1px solid #36327e;
}

/* report */
.content {
  padding: 0 20px 0 19px;
}
.report-head {
  display: flex;
  justify-content: space-between;
  height: 56px;
  align-items: flex-start;
}
.report-head h2 {
  margin: 2px 0 0;
  font-size: 12.8px;
  line-height: 16px;
  font-weight: 400;
  color: #1f2433;
}
.report-head p {
  margin: 3px 0 0;
  font-size: 10.3px;
  line-height: 14px;
  color: #6b7080;
}
.report-actions {
  display: flex;
  gap: 7px;
  margin-top: 6px;
}
.card {
  border: 1px solid #e8e8ec;
  border-radius: 7px;
  background: #fff;
}
.filters {
  height: 49px;
  padding: 12px;
  display: grid;
  grid-template-columns: repeat(4, 1fr);
  gap: 9px;
}
.field {
  height: 24px;
  border: 1px solid #dcdce0;
  border-radius: 6px;
  padding: 0 9px;
  display: flex;
  align-items: center;
  font-size: 11.2px;
  color: #1f2433;
}
.placeholder {
  color: #c2c2c7;
}
.range-start {
  width: 173px;
}
.range-arrow {
  color: #c5c5ca;
  width: 14px;
  font-size: 10px;
}
.range-end {
  flex: 1;
  margin-left: 4px;
}
.cal {
  width: 12px;
  height: 12px;
  fill: none;
  stroke: #b5b5ba;
  stroke-width: 2;
}
.stats {
  margin-top: 11px;
  display: grid;
  grid-template-columns: repeat(4, 1fr);
  gap: 10px;
}
.stat {
  height: 55px;
  padding: 9px 9px 0 10px;
  display: flex;
  justify-content: space-between;
  align-items: flex-start;
}
.stat-label {
  font-size: 9.6px;
  line-height: 14px;
  margin-top: 2px;
  color: #666b78;
}
.stat-value {
  font-size: 16px;
  line-height: 18px;
  font-weight: 700;
  margin-top: 2px;
  color: #141a2b;
}
.stat-value.green { color: #2ca24f; }
.stat-value.orange { color: #dd6b0c; }
.stat-icon {
  width: 19px;
  height: 19px;
  border-radius: 6px;
  background: #f2f4f7;
  display: flex;
  align-items: center;
  justify-content: center;
  color: #5c6478;
}
.stat-icon svg {
  width: 11px;
  height: 11px;
  fill: none;
  stroke: currentColor;
  stroke-width: 2;
}
.stat-icon svg.fill {
  fill: currentColor;
  stroke: none;
}

/* charts */
.charts {
  margin-top: 23px;
  display: grid;
  grid-template-columns: repeat(2, 1fr);
  gap: 9px;
}
.chart-card {
  height: 280px;
}
.card-title {
  height: 39px;
  padding-left: 12px;
  display: flex;
  align-items: center;
  font-size: 12.8px;
  border-bottom: 1px solid #eeeef1;
  color: #1f2433;
}
.chart {
  display: block;
  height: 239px;
}
.chart-line {
  width: 792px;
}
.chart-bar {
  width: 802px;
}
.grid-v path {
  fill: none;
  stroke: #f1f1f4;
  stroke-dasharray: 2 3;
}
.grid-h path {
  fill: none;
  stroke: #d6d6dc;
  stroke-dasharray: 2 2;
}
.axis {
  fill: none;
  stroke: #aab2cf;
}
.zero-line {
  fill: none;
  stroke: #8ea2d8;
  stroke-width: 1.5;
}
.chart text {
  font-family: Roboto, 'Liberation Sans', sans-serif;
  font-size: 12px;
  fill: #a4a4bd;
  dominant-baseline: central;
}
.y-labels text {
  text-anchor: end;
}
.x-labels text {
  text-anchor: middle;
}

/* detail table */
.detail {
  margin-top: 11px;
  padding-bottom: 20px;
}
.detail-tabs {
  display: flex;
  height: 35px;
  border-bottom: 1px solid #dcdce0;
  padding-left: 1px;
  gap: 2px;
  font-size: 10.8px;
}
.detail-tabs a {
  padding: 0 15.5px;
  line-height: 34px;
  color: #5b5f6c;
}
.detail-tabs a.active {
  padding: 0 13px;
  font-weight: 700;
  color: #36327e;
  background: #fff;
  border: 1px solid #dcdce0;
  border-bottom-color: #fff;
  border-radius: 7px 7px 0 0;
  height: 35px;
}
.report-table {
  width: 100%;
  border-collapse: collapse;
  font-size: 11px;
  table-layout: fixed;
}
.report-table th {
  height: 44px;
  background: #fafafa;
  text-align: left;
  font-weight: 700;
  padding: 0 13px;
  border-bottom: 1px solid #e8e8ec;
  position: relative;
  color: #1a1d26;
}
.report-table th + th::before {
  content: "";
  position: absolute;
  left: 0;
  top: 12px;
  height: 19px;
  width: 1px;
  background: #e6e6ea;
}
.report-table td {
  height: 44px;
  padding: 0 13px;
  border-bottom: 1px solid #e8e8ec;
  color: #2b2d33;
}
.col-date {
  width: 128px;
}
.report-table .col-count {
  width: 121px;
  text-align: center;
}
.report-table .col-money {
  width: 136px;
  text-align: right;
}

/* callouts */
.callout {
  position: absolute;
  left: 258px;
  width: 1622px;
  border: 4px solid #e93a14;
  border-radius: 9px;
}
.box-1 {
  left: 1691px;
  width: 206px;
  top: 233px;
  height: 29px;
  border-radius: 11px;
}
.box-2 { top: 295px; height: 31px; }
.box-3 { top: 338px; height: 68px; }
.box-4 { top: 425px; height: 266px; }
.box-5 { top: 730px; height: 171px; }
.marker {
  position: absolute;
  width: 41px;
  height: 41px;
  border: 3px solid #fff;
  border-radius: 50%;
  background: #e93a14;
  background-clip: padding-box;
  color: #fff;
  font-family: 'Open Sans', sans-serif;
  font-size: 24px;
  font-weight: 700;
  line-height: 35px;
  text-align: center;
}
.marker-1 { left: 1671px; top: 215px; }
.marker-2 { left: 238px; top: 276px; }
.marker-3 { left: 238px; top: 318px; }
.marker-4 { left: 238px; top: 406px; }
.marker-5 { left: 238px; top: 710px; }
```
